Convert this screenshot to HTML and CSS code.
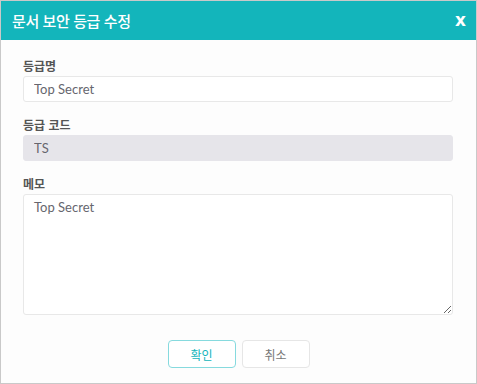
FILE: index.html
```html
<!DOCTYPE html>
<html lang="ko">

<head>
    <meta charset="UTF-8">
    <meta name="viewport" content="width=device-width, initial-scale=1.0">
    <title>문서 보안 등급 수정</title>
    <link rel="stylesheet" href="styles.css">
</head>

<body>
    <div class="dialog">
        <div class="dialog-header">
            <h1>문서 보안 등급 수정</h1>
            <button class="close-btn">x</button>
        </div>

        <form class="dialog-body">
            <div class="form-group">
                <label for="gradeName">등급명</label>
                <input type="text" id="gradeName" value="Top Secret">
            </div>

            <div class="form-group">
                <label for="gradeCode">등급 코드</label>
                <input type="text" id="gradeCode" value="TS" disabled>
            </div>

            <div class="form-group">
                <label for="memo">메모</label>
                <textarea id="memo">Top Secret</textarea>
            </div>

            <div class="btn-row">
                <button type="button" class="btn btn-ok">확인</button>
                <button type="button" class="btn btn-cancel">취소</button>
            </div>
        </form>
    </div>
</body>

</html>
```

FILE: styles.css
```css
* {
    margin: 0;
    padding: 0;
    box-sizing: border-box;
    font-family: Lato, 'Noto Sans CJK KR', sans-serif;
}

body {
    background: #ffffff;
}

.dialog {
    width: 477px;
    height: 384px;
    border: 1px solid #c9c9c9;
    background: #fdfdfd;
    display: flex;
    flex-direction: column;
}

.dialog-header {
    height: 39px;
    background: #13b5bb;
    display: flex;
    align-items: center;
    justify-content: space-between;
    padding: 0 10px 0 11px;
}

.dialog-header h1 {
    color: white;
    font-size: 15px;
    font-weight: 500;
    letter-spacing: -0.4px;
    font-family: 'Noto Sans CJK KR', sans-serif;
}

.close-btn {
    background: none;
    border: none;
    color: white;
    font-size: 17px;
    font-weight: 900;
    font-family: 'DejaVu Sans', sans-serif;
    line-height: 1;
    cursor: pointer;
    margin-top: -1px;
}

.dialog-body {
    display: flex;
    flex-direction: column;
    gap: 15px;
    padding: 18px 23px 0 22px;
}

.form-group {
    display: flex;
    flex-direction: column;
}

label {
    display: block;
    height: 16px;
    line-height: 16px;
    margin-bottom: 2px;
    font-size: 12px;
    font-weight: 700;
    color: #555555;
    font-family: 'Noto Sans CJK KR', sans-serif;
}

input[type="text"],
textarea {
    width: 100%;
    border: 1px solid #e8e8e8;
    border-radius: 3px;
    background: #ffffff;
    color: #66666e;
    font-size: 13px;
    padding: 0 10px;
    outline: none;
}

input[type="text"] {
    height: 26px;
}

input[type="text"]:disabled {
    background: #e6e5ea;
    border-color: #e6e5ea;
    color: #66666e;
}

textarea {
    height: 121px;
    padding-top: 4px;
    resize: vertical;
}

.btn-row {
    display: flex;
    justify-content: center;
    gap: 6px;
    margin-top: 10px;
    padding-left: 1px;
}

.btn {
    width: 68px;
    height: 28px;
    border-radius: 4px;
    background: #ffffff;
    font-size: 12px;
    font-family: 'Noto Sans CJK KR', sans-serif;
    cursor: pointer;
}

.btn-ok {
    border: 1px solid #86dade;
    color: #13b5bb;
}

.btn-cancel {
    border: 1px solid #e6e6e6;
    color: #777777;
}
```
